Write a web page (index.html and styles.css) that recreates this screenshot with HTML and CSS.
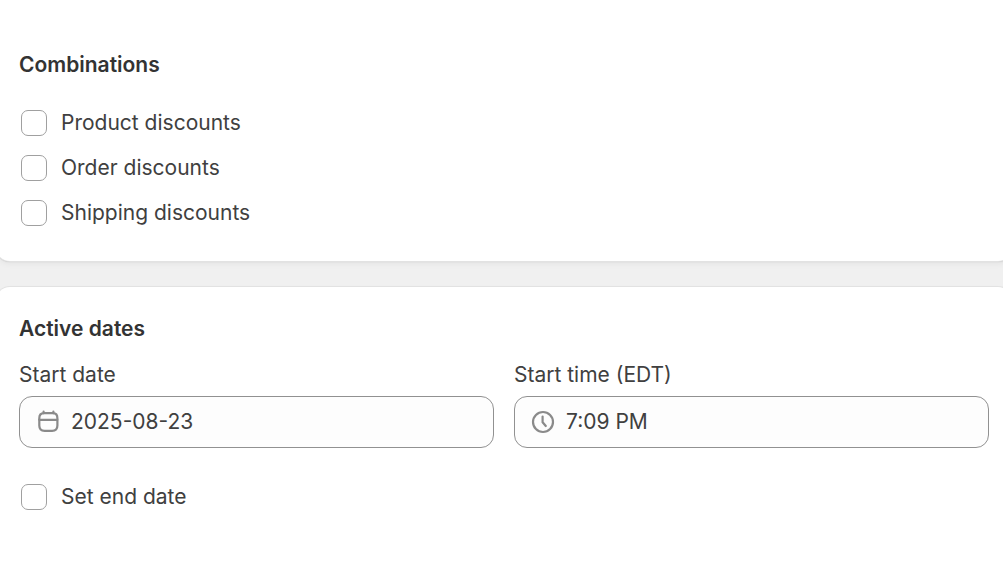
FILE: index.html
```
<!DOCTYPE html>
<html lang="en">
<head>
    <meta charset="UTF-8" />
    <meta name="viewport" content="width=device-width, initial-scale=1.0"/>
    <title>Discount - Combinations and dates</title>
    <link rel="stylesheet" href="styles.css">
</head>
<body>
<main class="page">
    <section class="card combinations">
        <h2>Combinations</h2>
        <div class="check-list">
            <label class="check"><input type="checkbox" name="product" />Product discounts</label>
            <label class="check"><input type="checkbox" name="order" />Order discounts</label>
            <label class="check"><input type="checkbox" name="shipping" />Shipping discounts</label>
        </div>
    </section>

    <section class="card dates">
        <h2>Active dates</h2>
        <div class="fields">
            <div class="form-group">
                <label for="startDate">Start date</label>
                <div class="field">
                    <svg class="icon" viewBox="0 0 24 24" aria-hidden="true">
                        <path d="M8 3.2h9c3 0 4.4 2 4.4 5v7.3c0 3.4-1.9 5.3-5.3 5.3H8.6c-3.4 0-5.3-1.9-5.3-5.3V8.200c0-3 1.700-5 4.700-5z" />
                        <path d="M3.300 9.800h18M7.600 1.700v1.500M17.400 1.700v1.500" />
                    </svg>
                    <input type="text" id="startDate" name="startDate" value="2025-08-23" />
                </div>
            </div>
            <div class="form-group">
                <label for="startTime">Start time (EDT)</label>
                <div class="field">
                    <svg class="icon" viewBox="0 0 24 24" aria-hidden="true">
                        <circle cx="12" cy="12" r="10" />
                        <path d="M11.600 6.500v5.700l3.200 3.800" />
                    </svg>
                    <input type="text" id="startTime" name="startTime" value="7:09 PM" />
                </div>
            </div>
        </div>
        <label class="check"><input type="checkbox" name="endDate" />Set end date</label>
    </section>
</main>
</body>
</html>
```
FILE: styles.css
```
:root {
    --text-color: #404040;
    --heading-color: #333;
    --border-color: #919191;
    --icon-color: #8a8a8a;
}
* {
    box-sizing: border-box;
    margin: 0;
    padding: 0;
}
body {
    font-family: Inter, sans-serif;
    font-size: 21px;
    line-height: 32px;
    color: var(--text-color);
    background: #f0f0f0;
    overflow-x: hidden;
}
/* cards run slightly past both sides of the window */
.page {
    display: flex;
    flex-direction: column;
    gap: 26px;
    min-height: 100vh;
    margin: 0 -9px 0 -4px;
    overflow: hidden;
}
.card {
    background: white;
    padding: 26px 23px 32px;
    border-radius: 14px;
    box-shadow: 0 0 0 1px #e2e2e2, 0 1px 1px #b5b5b5, 0 3px 6px rgba(0, 0, 0, 0.05);
}
.combinations {
    padding-top: 49px;
    border-radius: 0 0 14px 14px;
}
.dates {
    flex: 1;
    border-radius: 14px 14px 0 0;
}
h2 {
    color: var(--heading-color);
    font-size: 21px;
    font-weight: 600;
}
.check-list {
    display: flex;
    flex-direction: column;
    gap: 13px;
    margin-top: 26px;
}
.check {
    display: flex;
    align-items: center;
    gap: 14px;
    padding-left: 2px;
}
.check input {
    appearance: none;
    width: 26px;
    height: 26px;
    border: 1px solid #a0a0a0;
    border-radius: 7px;
    background: white;
}
.check input:checked {
    background: var(--heading-color);
}
.fields {
    display: grid;
    grid-template-columns: 1fr 1fr;
    gap: 20px;
    margin: 14px 0 33px;
}
.form-group {
    display: flex;
    flex-direction: column;
    gap: 5px;
}
.field {
    display: flex;
    align-items: center;
    gap: 11px;
    height: 52px;
    padding: 0 16px;
    border: 1px solid var(--border-color);
    border-radius: 13px;
    background: #fdfdfd;
}
.field input {
    flex: 1;
    min-width: 0;
    border: none;
    outline: none;
    background: transparent;
    font: inherit;
    color: inherit;
}
.icon {
    width: 24px;
    height: 24px;
    fill: none;
    stroke: var(--icon-color);
    stroke-width: 2.2;
    stroke-linecap: round;
    stroke-linejoin: round;
}
```
